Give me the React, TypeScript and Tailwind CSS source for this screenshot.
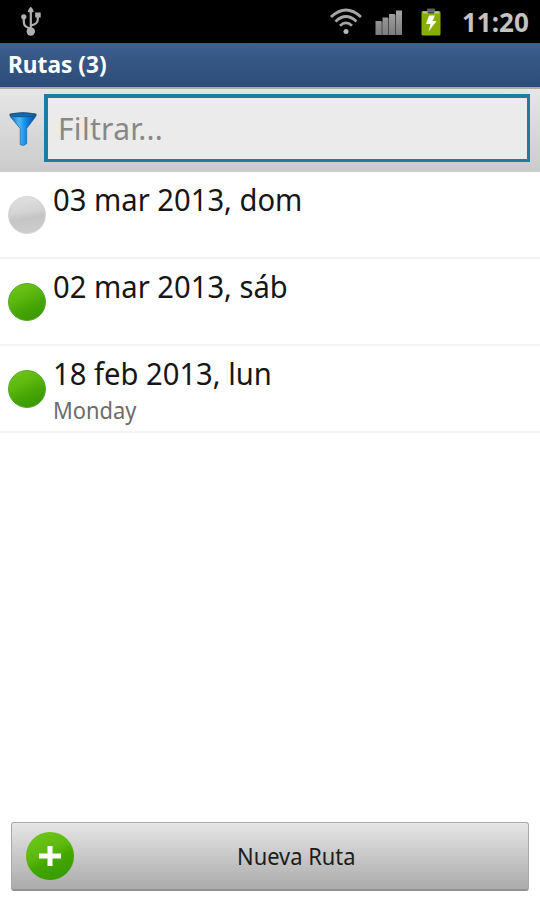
import { useState } from "react";
import clsx from "clsx";

type RouteType = {
  id: number;
  date: string;
  note?: string;
  synced: boolean;
};

const routes: RouteType[] = [
  { id: 3, date: "03 mar 2013, dom", synced: false },
  { id: 2, date: "02 mar 2013, sáb", synced: true },
  { id: 1, date: "18 feb 2013, lun", note: "Monday", synced: true },
];

const UsbIcon = () => (
  <svg width="20" height="29" viewBox="0 0 20 29" fill="none" stroke="#b0b0b0">
    <path d="M9.800 4V25M9.800 21.500C4.500 20.500 2.800 18.500 2.800 15V10M9.800 18.500C15 17.500 16.800 16 16.800 12V9" strokeWidth="2.200" />
    <path d="M9.800 0Q11 0 12.800 4.500Q12.500 5.500 9.800 5.500Q7 5.500 6.800 4.500Q8.500 0 9.800 0Z" fill="#b0b0b0" stroke="none" />
    <circle cx="2.800" cy="9.800" r="2.600" fill="#b0b0b0" stroke="none" />
    <path d="M14.200 5.500h5.500v5h-5.500z" fill="#b0b0b0" stroke="none" />
    <circle cx="9.800" cy="24.500" r="4.200" fill="#b0b0b0" stroke="none" />
  </svg>
);

const WifiIcon = () => (
  <svg width="32" height="27" viewBox="0 0 32 27" fill="none" stroke="#a6a6a6" strokeWidth="2.800">
    <path d="M1 9Q16 -5 31 9" />
    <path d="M5.500 13.500Q16 3.500 26.500 13.500" />
    <path d="M10 17.700Q16 12 22 17.700" />
    <circle cx="16" cy="23.500" r="2.500" fill="#b8b8b8" stroke="none" />
  </svg>
);

const SignalIcon = () => (
  <svg width="28" height="26" viewBox="0 0 28 26">
    <defs>
      <linearGradient id="signal" x1="0" y1="0" x2="0" y2="1">
        <stop offset="0" stopColor="#a4a4a4" />
        <stop offset="1" stopColor="#7c7c7c" />
      </linearGradient>
    </defs>
    <path d="M1 12h26v13H1zM8 8h19v4H8zM15 5h12v5H15z" fill="#484848" />
    <path
      d="M.5 11h6v14h-6zM7.500 7.500h5.500V25H7.500zM14 4h6v21h-6zM21 .5h6V25h-6z"
      fill="url(#signal)"
    />
  </svg>
);

const BatteryIcon = () => (
  <svg width="20" height="28" viewBox="0 0 20 28">
    <path d="M6 3V1.500Q6 .5 7 .5h6q1 0 1 1V3z" fill="#606060" />
    <rect x=".5" y="3" width="19" height="24.500" rx="1.500" fill="#86ad00" />
    <path d="M2 3.500h16v2H2z" fill="#b8c690" />
    <path d="M6 3.500h8L12.500 5.500h-5z" fill="#444" />
    <path d="M8 7.500h6L11.500 13h4L7.500 23.500 9.500 16H5z" fill="#fff" />
  </svg>
);

const FunnelIcon = () => (
  <svg width="29" height="35" viewBox="0 0 29 35">
    <defs>
      <linearGradient id="funnel" x1="0" y1="0" x2="1" y2="0">
        <stop offset="0" stopColor="#0a5fae" />
        <stop offset=".35" stopColor="#4db9f6" />
        <stop offset=".55" stopColor="#1795ee" />
        <stop offset=".75" stopColor="#0a6fcc" />
        <stop offset="1" stopColor="#0a4f96" />
      </linearGradient>
    </defs>
    <path
      d="M.8 2Q14 -1 27.300 2Q27.300 4 26 5.500L17.700 16.500V31.500Q14.300 35 11.200 32.500V16.500L1.500 5Q.8 4 .8 2Z"
      fill="url(#funnel)"
      stroke="#1c61a0"
      strokeWidth=".7"
    />
    <ellipse cx="14" cy="2.900" rx="12.500" ry="1.900" fill="#1569ab" stroke="#174c77" strokeWidth=".8" />
  </svg>
);

const StatusBar = () => (
  <header className="flex h-[43px] shrink-0 items-center bg-black pr-[11px] pl-[21px]">
    <UsbIcon />
    <div className="ml-auto flex items-center">
      <WifiIcon />
      <div className="ml-[13px] pt-[2px]">
        <SignalIcon />
      </div>
      <div className="ml-[18px]">
        <BatteryIcon />
      </div>
      <span className="ml-[21px] w-[67px] pt-[2px] text-[26px] leading-[43px] font-bold whitespace-nowrap text-[#c3c3c3]">
        11:20
      </span>
    </div>
  </header>
);

const RouteDot = ({ synced }: { synced: boolean }) => (
  <div
    className={clsx(
      "mt-6 size-[38px] shrink-0 rounded-full border",
      synced
        ? "border-[#55a82c] bg-[linear-gradient(155deg,#74c81a_0%,#5ab60e_40%,#48a606_60%,#349500_100%)]"
        : "border-[#d4d4d4] bg-[linear-gradient(170deg,#e2e2e2_0%,#d3d3d3_42%,#c5c5c5_58%,#cfcfcf_100%)]"
    )}
  />
);

const RouteRow = ({ route }: { route: RouteType }) => (
  <li className="flex h-[87px] border-b-2 border-[#f3f3f3] pl-2">
    <RouteDot synced={route.synced} />
    <div className="ml-[7px] whitespace-nowrap">
      <p className="mt-2 h-10 origin-left scale-x-[.973] text-[30px] leading-10 text-[#161616]">
        {route.date}
      </p>
      {route.note && (
        <p className="-mt-px origin-left scale-x-[.95] text-[23px] leading-[34px] text-[#6c6c6c]">
          {route.note}
        </p>
      )}
    </div>
  </li>
);

const App = () => {
  const [filter, setFilter] = useState("");

  const visible = routes.filter(({ date, note }) =>
    `${date} ${note ?? ""}`.toLowerCase().includes(filter.toLowerCase())
  );

  return (
    <div className="flex h-[900px] w-[540px] flex-col overflow-hidden bg-white font-['Noto_Sans',sans-serif]">
      <StatusBar />
      <div className="h-11 shrink-0 bg-linear-to-b from-[#40609d] via-[#395b89] via-20% to-[#2c4c78] pl-2">
        <h1 className="w-fit origin-left scale-x-[.985] text-[23px] leading-[43px] font-bold text-white">
          Rutas (3)
        </h1>
      </div>
      <div className="flex h-[85px] shrink-0 border-t-2 border-[#aaaaa8] bg-linear-to-b from-[#e6e6e6] to-[#cbcbcb] pt-[5px] pr-[10px] pl-[9px]">
        <div className="mt-[18px] w-[35px]">
          <FunnelIcon />
        </div>
        <input
          className="h-[68px] w-[486px] border-[3px] border-t-4 border-l-4 border-[#1c7da3] bg-[#ebebeb] pb-px pl-[10px] text-[30px] tracking-[.3px] text-[#333] outline-none placeholder:text-[#888]"
          placeholder="Filtrar..."
          value={filter}
          onChange={(e) => setFilter(e.target.value)}
        />
      </div>
      <ul className="grow">
        {visible.map((route) => (
          <RouteRow key={route.id} route={route} />
        ))}
      </ul>
      <button className="mx-[11px] mb-[9px] flex h-[69px] shrink-0 items-center rounded-[3px] border border-b-2 border-[#aaa] border-b-[#929292] bg-linear-to-b from-[#e6e6e6] to-[#ababab] pl-[14px]">
        <span className="flex size-12 items-center justify-center rounded-full bg-[linear-gradient(155deg,#73c91c_0%,#5cb80e_42%,#43a800_58%,#329600_100%)]">
          <svg width="22" height="20" viewBox="0 0 22 20" stroke="#fff" strokeWidth="5">
            <path d="M11 0V20M0 10H22" />
          </svg>
        </span>
        <span className="grow pr-[9px] text-center text-[23px] text-[#1c1c1c]">
          <span className="inline-block scale-x-[.95]">Nueva Ruta</span>
        </span>
      </button>
    </div>
  );
};

export default App;
